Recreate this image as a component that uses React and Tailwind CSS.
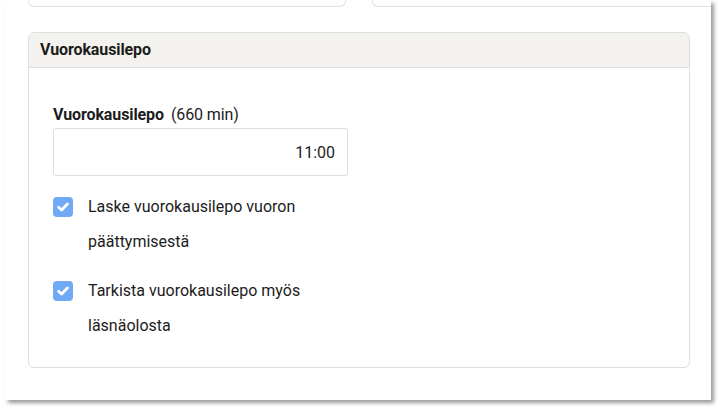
import React, { useState } from 'react';

const CheckRow = ({ checked, onToggle, children }) => (
  <label className="flex items-start gap-[15px] cursor-pointer">
    <span
      onClick={onToggle}
      className={`mt-[7.5px] w-5 h-5 shrink-0 rounded-[4px] flex items-center justify-center ${checked ? 'bg-[#70a9f5]' : 'bg-white border border-[#ccc]'}`}
    >
      {checked && (
        <svg width="12" height="10" viewBox="0 0 12 10" fill="none">
          <path d="M1.6 5.2 L4.6 8 L10.4 2" stroke="white" strokeWidth="2.8" strokeLinecap="round" strokeLinejoin="round" />
        </svg>
      )}
    </span>
    <span className="text-[16px] leading-[35px] text-[#1c1c1c]">{children}</span>
  </label>
);

const App = () => {
  const [endCalc, setEndCalc] = useState(true);
  const [presence, setPresence] = useState(true);

  return (
    <div className="min-h-[408px] bg-white px-[5px] font-['Roboto','Liberation_Sans',sans-serif]">
      <div className="w-[706px] h-[400px] bg-white shadow-[3px_3px_4px_rgba(0,0,0,0.4)] overflow-hidden">
        {/* bottoms of the cards above */}
        <div className="flex gap-[26px] pl-[23px] h-[7px]">
          <div className="w-[318px] h-[7px] border border-t-0 border-[#e0e0e0] rounded-b-[6px]" />
          <div className="flex-1 h-[7px] border-b border-l border-[#e0e0e0] rounded-bl-[6px]" />
        </div>

        <section className="ml-[23px] mr-[21px] mt-[25px] border border-[#dedede] rounded-[6px] overflow-hidden">
          <div className="h-[35px] bg-[#f4f2ee] border-b border-[#dedede] px-[11px] flex items-center">
            <h3 className="text-[16px] font-bold text-[#1c1c1c] tracking-[-0.1px]">Vuorokausilepo</h3>
          </div>

          <div className="pl-6 pt-[37px] pb-[24px]">
            <div className="w-[295px]">
              <div className="text-[16px] leading-5 text-[#1c1c1c] mb-[3px] tracking-[-0.1px]">
                <span className="font-bold">Vuorokausilepo</span>
                <span className="ml-[7px]">(660 min)</span>
              </div>
              <input
                type="text"
                defaultValue="11:00"
                className="w-full h-[48px] border border-[#dcdcdc] rounded-[3px] px-3 text-right text-[16px] text-[#1c1c1c] outline-none"
              />

              <div className="mt-[13px] space-y-[14px]">
                <CheckRow checked={endCalc} onToggle={() => setEndCalc(!endCalc)}>
                  Laske vuorokausilepo vuoron päättymisestä
                </CheckRow>
                <CheckRow checked={presence} onToggle={() => setPresence(!presence)}>
                  Tarkista vuorokausilepo myös läsnäolosta
                </CheckRow>
              </div>
            </div>
          </div>
        </section>
      </div>
    </div>
  );
};

export default App;
